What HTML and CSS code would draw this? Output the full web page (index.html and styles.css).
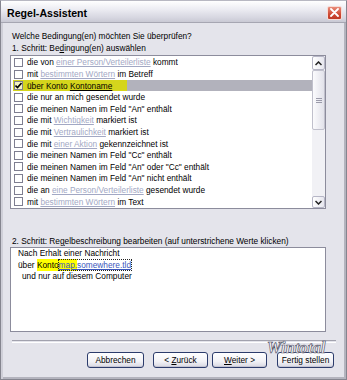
FILE: index.html
```html
<!DOCTYPE html>
<html lang="de">
<head>
  <meta charset="UTF-8">
  <meta name="viewport" content="width=device-width, initial-scale=1.0">
  <title>Regel-Assistent</title>
  <link rel="stylesheet" href="styles.css">
</head>
<body>
  <div class="window">
    <div class="titlebar">
      <span class="title">Regel-Assistent</span>
      <span class="close">
        <svg width="9" height="9" viewBox="0 0 9 9"><path d="M1 1 L8 8 M8 1 L1 8" stroke="#fff" stroke-width="1.8" stroke-linecap="round"/></svg>
      </span>
    </div>
    <div class="content">
      <p class="label">Welche Bedingung(en) möchten Sie überprüfen?</p>
      <p class="label step1">1. Schritt: Be<u>d</u>ingung(en) auswählen</p>
      <div class="listbox">
        <ul class="rows">
          <li><span class="check"></span><span class="text">die von <span class="link">einer Person/Verteilerliste</span> kommt</span></li>
          <li><span class="check"></span><span class="text">mit <span class="link">bestimmten Wörtern</span> im Betreff</span></li>
          <li class="selected"><span class="check checked"><svg width="7" height="7" viewBox="0 0 7 7"><path d="M0.5 3.5 L2.5 5.5 L6.5 1" fill="none" stroke="#000" stroke-width="1.6"/></svg></span><span class="text">über Konto <u>Kontoname</u></span></li>
          <li><span class="check"></span><span class="text">die nur an mich gesendet wurde</span></li>
          <li><span class="check"></span><span class="text">die meinen Namen im Feld "An" enthält</span></li>
          <li><span class="check"></span><span class="text">die mit <span class="link">Wichtigkeit</span> markiert ist</span></li>
          <li><span class="check"></span><span class="text">die mit <span class="link">Vertraulichkeit</span> markiert ist</span></li>
          <li><span class="check"></span><span class="text">die mit <span class="link">einer Aktion</span> gekennzeichnet ist</span></li>
          <li><span class="check"></span><span class="text">die meinen Namen im Feld "Cc" enthält</span></li>
          <li><span class="check"></span><span class="text">die meinen Namen im Feld "An" oder "Cc" enthält</span></li>
          <li><span class="check"></span><span class="text">die meinen Namen im Feld "An" nicht enthält</span></li>
          <li><span class="check"></span><span class="text">die an <span class="link">eine Person/Verteilerliste</span> gesendet wurde</span></li>
          <li><span class="check"></span><span class="text">mit <span class="link">bestimmten Wörtern</span> im Text</span></li>
        </ul>
        <div class="scrollbar">
          <span class="sb-btn sb-up"><svg width="7" height="5" viewBox="0 0 7 5"><path d="M0.5 4 L3.5 1 L6.5 4" fill="none" stroke="#222" stroke-width="1.5"/></svg></span>
          <span class="sb-thumb"><span class="grip"></span></span>
          <span class="sb-track"></span>
          <span class="sb-btn sb-down"><svg width="7" height="5" viewBox="0 0 7 5"><path d="M0.5 1 L3.5 4 L6.5 1" fill="none" stroke="#222" stroke-width="1.5"/></svg></span>
        </div>
      </div>
      <p class="label step2">2. Schritt: Re<u>g</u>elbeschreibung bearbeiten (auf unterstrichene Werte klicken)</p>
      <div class="desc">
        <p>Nach Erhalt einer Nachricht</p>
        <p>über <span class="hl">Konto</span><span class="focus"><span class="value"><span class="hl">map.</span>somewhere.tld</span></span></p>
        <p class="indent">und nur auf diesem Computer</p>
      </div>
      <div class="separator"></div>
      <div class="buttons">
        <button class="btn btn-cancel">Abbrechen</button>
        <button class="btn btn-back">&lt; <u>Z</u>urück</button>
        <button class="btn btn-next"><u>W</u>eiter &gt;</button>
        <button class="btn btn-finish">Fertig stellen</button>
      </div>
    </div>
    <span class="watermark">Wintotal</span>
  </div>
</body>
</html>
```

FILE: styles.css
```css
body {
  margin: 0;
  font-family: "Liberation Sans", Arial, sans-serif;
  font-size: 8.3px;
  color: #000;
}
.window {
  position: relative;
  width: 347px;
  height: 380px;
  box-sizing: border-box;
  border: 1px solid #85858f;
  border-top-color: #b8b8c2;
  background-color: #e4e4eb;
  box-shadow: inset 2px 0 0 #cfcfd8, inset -2px 0 0 #b4b4be, inset 0 -2px 0 #b4b4be;
  overflow: hidden;
}
.titlebar {
  height: 21px;
  display: flex;
  justify-content: space-between;
  align-items: center;
  padding: 0 4px 0 6px;
  border-bottom: 1px solid #a6a6b2;
  background: linear-gradient(#ffffff, #ececf2 40%, #d6d6e0 80%, #c9c9d4);
}
.title {
  font-weight: bold;
  font-size: 10.6px;
  color: #000;
  margin-top: 2px;
}
.close {
  width: 15px;
  height: 14px;
  box-sizing: border-box;
  display: flex;
  justify-content: center;
  align-items: center;
  margin-top: 2px;
  border: 1px solid #f6dcd6;
  border-radius: 2px;
  background: linear-gradient(#e98c7a, #cf4a34 60%, #bf3a26);
}
.content {
  padding: 7px 0 0 9px;
}
.label {
  margin: 0;
  padding-left: 2px;
  line-height: 12px;
  white-space: nowrap;
}
.step1 {
  margin-bottom: 1px;
}
.listbox {
  width: 316px;
  height: 154px;
  box-sizing: border-box;
  display: flex;
  border: 1px solid #8c8c9c;
  background-color: #fff;
}
.rows {
  flex: 1;
  list-style: none;
  margin: 0;
  padding: 0.7px 0 0 2px;
  overflow: hidden;
}
.rows li {
  height: 11.6px;
  display: flex;
  align-items: center;
  padding-left: 1px;
  white-space: nowrap;
}
.rows li.selected {
  background: linear-gradient(to right, #d5d51c 114px, #b2b2bc 114px);
}
.check {
  width: 9px;
  height: 9px;
  box-sizing: border-box;
  margin-right: 4px;
  border: 1px solid #7e7e90;
  background-color: #fff;
  display: flex;
  justify-content: center;
  align-items: center;
  flex-shrink: 0;
}
.check.checked {
  background-color: #f4f4c0;
}
.link {
  color: #a2a8c4;
  text-decoration: underline;
}
.scrollbar {
  width: 13px;
  display: flex;
  flex-direction: column;
  background-color: #f2f2f6;
}
.sb-btn {
  box-sizing: border-box;
  display: flex;
  justify-content: center;
  align-items: center;
  border: 1px solid #b6b6c6;
  border-radius: 2px;
  background: linear-gradient(to right, #ffffff, #e6e6ee);
}
.sb-up {
  height: 14px;
}
.sb-down {
  height: 12px;
}
.sb-thumb {
  height: 60px;
  box-sizing: border-box;
  display: flex;
  justify-content: center;
  align-items: center;
  border: 1px solid #c0c0cc;
  border-radius: 2px;
  background: linear-gradient(to right, #fbfbfd, #e2e2ea);
}
.grip {
  width: 6px;
  height: 5px;
  background: repeating-linear-gradient(#9a9aaa 0 1px, transparent 1px 2px);
}
.sb-track {
  flex: 1;
  background-color: #f1f1f5;
}
.step2 {
  margin-top: 26px;
}
.desc {
  width: 316px;
  height: 85px;
  box-sizing: border-box;
  padding: 0 0 0 7px;
  border: 1px solid #8c8c9c;
  background-color: #fff;
}
.desc p {
  margin: 0;
  line-height: 11.6px;
  white-space: nowrap;
}
.desc .indent {
  padding-left: 4px;
}
.hl {
  background-color: #ffff00;
  padding: 1px 0;
}
.focus {
  outline: 1px dotted #222;
  outline-offset: 0;
}
.value {
  color: #3a56bc;
  text-decoration: underline;
}
.focus .hl {
  color: #3a56bc;
}
.separator {
  width: 324px;
  height: 1px;
  margin: 8px 0 0 2px;
  border-top: 1px solid #a2a2ae;
  border-bottom: 1px solid #fff;
}
.buttons {
  display: flex;
  justify-content: flex-end;
  padding: 9px 12px 0 0;
}
.btn {
  width: 56px;
  height: 16px;
  padding: 0;
  font-family: inherit;
  font-size: 8.3px;
  color: #000;
  border: 1px solid #2c3c6c;
  border-radius: 3px;
  background: linear-gradient(#ffffff, #f2f2f6 60%, #d8d8e2);
  box-shadow: inset 0 -1px 0 #c4c4d2;
}
.btn-cancel {
  width: 57px;
}
.btn-back {
  margin-left: 9px;
  width: 55px;
}
.btn-next {
  margin-left: 4px;
  width: 55px;
}
.btn-finish {
  margin-left: 10px;
  width: 57px;
}
.watermark {
  position: absolute;
  left: 266px;
  top: 338px;
  font-family: "Liberation Serif", serif;
  font-style: italic;
  font-weight: bold;
  font-size: 16px;
  letter-spacing: 0.3px;
  color: #fff;
  -webkit-text-stroke: 0.7px #55556a;
}
```
